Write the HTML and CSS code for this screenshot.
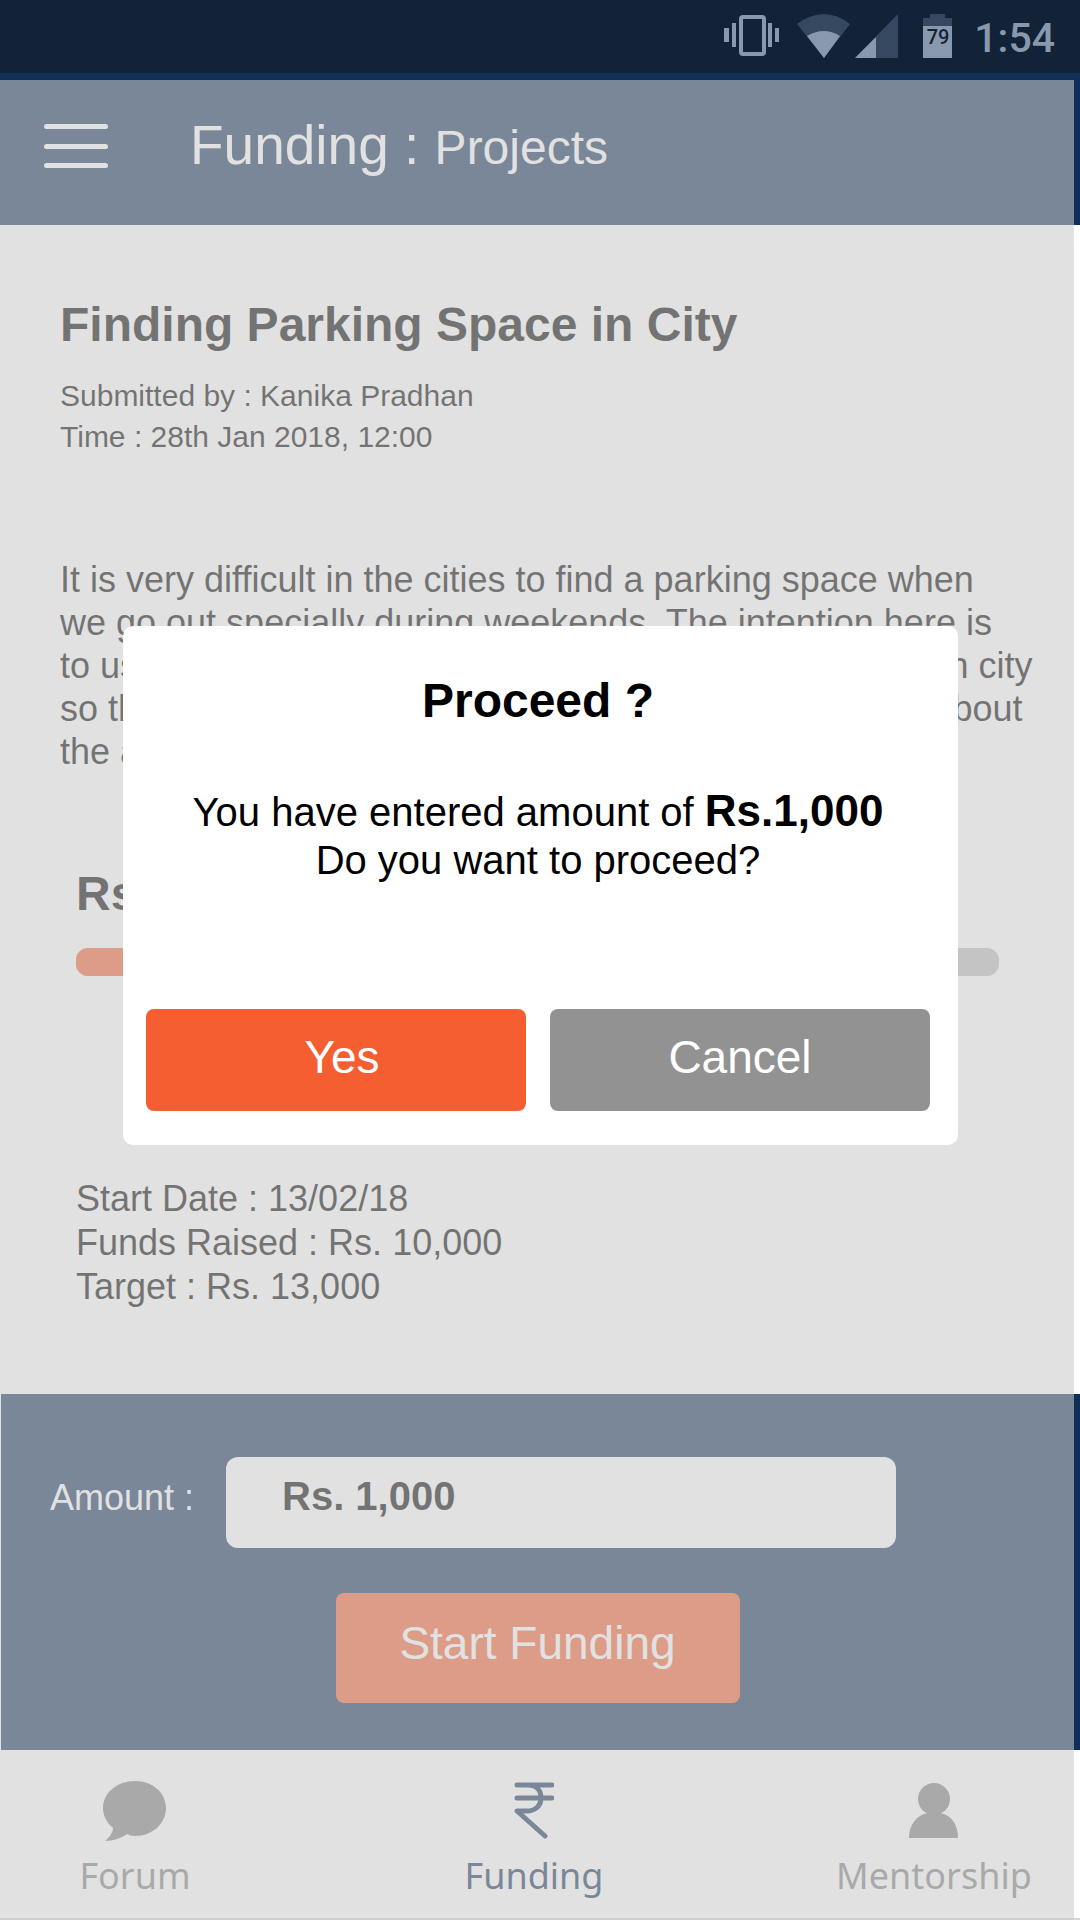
FILE: index.html
```html
<!DOCTYPE html>
<html lang="en">
<head>
<meta charset="utf-8">
<meta name="viewport" content="width=device-width, initial-scale=1">
<title>Funding : Projects</title>
<link rel="stylesheet" href="styles.css">
</head>
<body>
<div class="status-bar">
  <svg class="icon-vibrate" width="56" height="44" viewBox="0 0 56 44" aria-hidden="true">
    <rect x="17" y="3" width="23" height="37" rx="2" fill="none" stroke="currentColor" stroke-width="4"/>
    <path d="M0 14h5v14H0zM8 9h4v24H8zM44 9h4v24h-4zM51 14h4v14h-4z" fill="currentColor"/>
  </svg>
  <svg class="icon-wifi" width="54" height="44" viewBox="0 0 54 44" aria-hidden="true">
    <path class="dim" d="M0 10Q27-10 53 10L27 44z"/>
    <path d="M10 22Q27 12 43 22L27 44z" fill="currentColor"/>
  </svg>
  <svg class="icon-signal" width="43" height="44" viewBox="0 0 43 44" aria-hidden="true">
    <path class="dim" d="M43 0v44H0z"/>
    <path d="M21 23v21H0z" fill="currentColor"/>
  </svg>
  <svg class="icon-battery" width="29" height="44" viewBox="0 0 29 44" aria-hidden="true">
    <path class="dim" d="M0 4h7V0h15v4h7v10H0z"/>
    <path d="M0 12h29v32H0z" fill="currentColor"/>
    <text class="battery-level" x="15" y="30" text-anchor="middle">79</text>
  </svg>
  <time class="clock">1:54</time>
</div>

<header class="app-header">
  <button class="menu-button" type="button" aria-label="Menu"><span></span><span></span><span></span></button>
  <h1 class="app-title">Funding : <span class="app-section">Projects</span></h1>
</header>

<main class="project">
  <h2 class="project-title">Finding Parking Space in City</h2>
  <p class="project-meta">Submitted by : Kanika Pradhan<br>Time : 28th Jan 2018, 12:00</p>
  <p class="project-text">It is very difficult in the cities to find a parking space when<br>we go out specially during weekends. The intention here is<br>to use the technology to spot the vacant parking space in city<br>so that the people can quickly get the right information about<br>the availability.</p>
  <section class="funds">
    <h3 class="funds-raised">Rs. 10,000</h3>
    <div class="progress"><div class="progress-fill" style="width:77%"></div></div>
    <p class="funds-details">Start Date : 13/02/18<br>Funds Raised : Rs. 10,000<br>Target : Rs. 13,000</p>
  </section>
</main>

<form class="fund-form">
  <div class="amount-row">
    <label class="amount-label" for="amount">Amount :</label>
    <input class="amount-input" id="amount" type="text" value="Rs. 1,000">
  </div>
  <button class="start-button" type="button">Start Funding</button>
</form>

<nav class="tabs">
  <a class="tab" href="#forum">
    <svg width="64" height="60" viewBox="0 0 64 60" aria-hidden="true"><path fill="currentColor" d="M32 0C50 0 63 12 63 27S50 55 32 55C29 55 26 54 24 53C18 57 11 60 2 60C7 56 10 51 10 47C4 42 0 35 0 27C0 12 14 0 32 0z"/></svg>
    Forum
  </a>
  <a class="tab tab-active" href="#funding">
    <svg width="40" height="60" viewBox="0 0 40 60" fill="none" stroke="currentColor" stroke-width="5" stroke-linecap="round" stroke-linejoin="round" aria-hidden="true"><path d="M3 4h35M3 17h35M14 4C23 4 27 10 27 17C27 25 21 30 13 30H3L31 55"/></svg>
    Funding
  </a>
  <a class="tab" href="#mentorship">
    <svg width="50" height="60" viewBox="0 0 50 60" fill="currentColor" aria-hidden="true"><circle cx="25" cy="18" r="16"/><path d="M0 57C0 43 8 34 19 32H31C42 34 49 43 49 57z"/></svg>
    Mentorship
  </a>
</nav>

<div class="scrim"></div>
<div class="dialog-layer">
  <div class="dialog" role="dialog" aria-modal="true" aria-labelledby="dialog-title">
    <h2 class="dialog-title" id="dialog-title">Proceed ?</h2>
    <p class="dialog-text">You have entered amount of <strong class="dialog-amount">Rs.1,000</strong><br>Do you want to proceed?</p>
    <div class="dialog-actions">
      <button class="dialog-button dialog-yes" type="button">Yes</button>
      <button class="dialog-button dialog-cancel" type="button">Cancel</button>
    </div>
  </div>
</div>
</body>
</html>
```
FILE: styles.css
```css
:root {
  --navy: #0f2f57;
  --orange: #f65f30;
  --sans: "Liberation Sans", Arial, sans-serif;
}

* {
  box-sizing: border-box;
}

body {
  position: relative;
  display: flex;
  flex-direction: column;
  min-height: 100vh;
  margin: 0;
  background: #fff;
  color: #000;
  font-family: var(--sans);
}

h1, h2, h3, p {
  margin: 0;
}

button, input {
  border: 0;
  font-family: inherit;
}

/* Status bar */
.status-bar {
  display: flex;
  align-items: flex-start;
  justify-content: flex-end;
  height: 73px;
  padding: 14px 25px 0 0;
  background: #122338;
  color: #8899ad;
}

.status-bar .dim {
  fill: #364860;
}

.icon-wifi {
  margin-left: 17px;
}

.icon-signal {
  margin-left: 4px;
}

.icon-battery {
  margin-left: 25px;
}

.battery-level {
  fill: #122338;
  font: 500 20px Roboto, sans-serif;
}

.clock {
  margin-left: 22px;
  font: 500 41px/48px Roboto, sans-serif;
}

/* Header */
.app-header {
  display: flex;
  align-items: center;
  gap: 82px;
  height: 152px;
  padding: 0 44px 6px;
  background: var(--navy);
  color: #fff;
}

.menu-button {
  display: flex;
  flex-direction: column;
  justify-content: space-between;
  width: 64px;
  height: 44px;
  padding: 0;
  background: none;
}

.menu-button span {
  height: 5px;
  border-radius: 3px;
  background: #fff;
}

.app-title {
  font-size: 55px;
  font-weight: 400;
  line-height: 64px;
}

.app-section {
  font-size: 48px;
}

/* Project */
.project {
  flex: 1;
  padding: 72px 45px 85px 60px;
}

.project-title {
  font-size: 48px;
  line-height: 56px;
}

.project-meta {
  margin-top: 22px;
  font-size: 30px;
  line-height: 41px;
}

.project-text {
  margin-top: 101px;
  font-size: 36px;
  line-height: 43px;
  white-space: nowrap;
}

.funds {
  margin: 93px 36px 0 16px;
}

.funds-raised {
  font-size: 48px;
  line-height: 56px;
}

.progress {
  height: 28px;
  margin-top: 26px;
  border-radius: 12px;
  background: #bdbdbd;
}

.progress-fill {
  height: 100%;
  border-radius: 12px;
  background: var(--orange);
}

.funds-details {
  margin-top: 201px;
  font-size: 36px;
  line-height: 44px;
}

/* Funding form */
.fund-form {
  display: flex;
  flex-direction: column;
  align-items: center;
  gap: 45px;
  margin-left: 1px;
  padding: 63px 6px 47px 0;
  background: var(--navy);
}

.amount-row {
  display: flex;
  align-self: stretch;
  padding: 0 178px 0 49px;
}

.amount-label {
  width: 176px;
  color: #fff;
  font-size: 36px;
  line-height: 81px;
}

.amount-input {
  flex: 1;
  min-width: 0;
  height: 91px;
  padding: 0 56px 13px;
  border-radius: 12px;
  background: #fff;
  color: #000;
  font-size: 40px;
  font-weight: 700;
}

.start-button {
  width: 404px;
  height: 110px;
  padding: 0 0 10px;
  border-radius: 8px;
  background: var(--orange);
  color: #fff;
  font-size: 46px;
}

/* Bottom tabs */
.tabs {
  display: grid;
  grid-template-columns: 270fr 528fr 272fr;
  padding: 31px 10px 18px 0;
  border-bottom: 2px solid #d6d6d6;
}

.tab {
  display: flex;
  flex-direction: column;
  align-items: center;
  gap: 11px;
  color: #7e7e7e;
  font: 36px/48px "Noto Sans", sans-serif;
  text-decoration: none;
}

.tab-active {
  color: var(--navy);
}

/* Confirmation dialog */
.scrim {
  position: absolute;
  inset: 80px 6px 0 0;
  background: rgba(203, 203, 203, 0.57);
}

.dialog-layer {
  position: absolute;
  inset: 0;
  padding: 626px 122px 0 123px;
}

.dialog {
  padding: 47px 28px 34px 23px;
  border-radius: 10px;
  background: #fff;
  text-align: center;
}

.dialog-title {
  font-size: 48px;
  line-height: 56px;
}

.dialog-text {
  margin-top: 58px;
  font-size: 40px;
  line-height: 48px;
}

.dialog-amount {
  font-size: 44px;
}

.dialog-actions {
  display: grid;
  grid-template-columns: 1fr 1fr;
  gap: 24px;
  margin-top: 125px;
}

.dialog-button {
  height: 102px;
  padding: 0 0 6px;
  border-radius: 8px;
  color: #fff;
  font-size: 46px;
}

.dialog-yes {
  padding-left: 12px;
  background: #f55e30;
}

.dialog-cancel {
  background: #929292;
}
```
